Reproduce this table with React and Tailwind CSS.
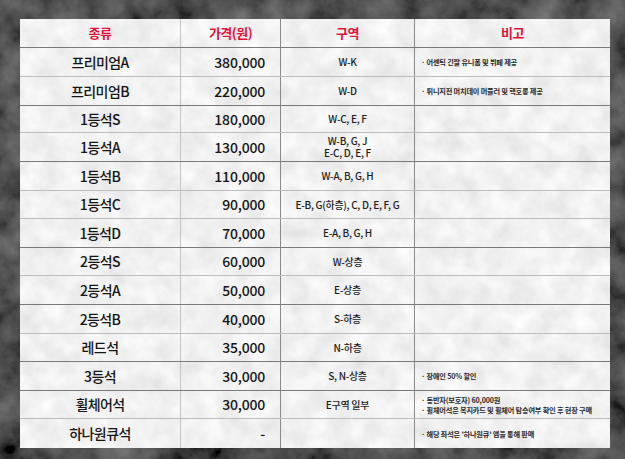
import React from "react";

const rows = [
  { name: "프리미엄A", price: "380,000", zone: ["W-K"], note: ["· 어센틱 긴팔 유니폼 및 뷔페 제공"], h: "h-[29px]", dark: false },
  { name: "프리미엄B", price: "220,000", zone: ["W-D"], note: ["· 튀니지전 머치데이 머플러 및 핵호롱 제공"], h: "h-[29px]", dark: true },
  { name: "1등석S", price: "180,000", zone: ["W-C, E, F"], note: [], h: "h-[27px]", dark: false },
  { name: "1등석A", price: "130,000", zone: ["W-B, G, J", "E-C, D, E, F"], note: [], h: "h-[29px]", dark: true },
  { name: "1등석B", price: "110,000", zone: ["W-A, B, G, H"], note: [], h: "h-[29px]", dark: false },
  { name: "1등석C", price: "90,000", zone: ["E-B, G(하층), C, D, E, F, G"], note: [], h: "h-[28px]", dark: false },
  { name: "1등석D", price: "70,000", zone: ["E-A, B, G, H"], note: [], h: "h-[29px]", dark: true },
  { name: "2등석S", price: "60,000", zone: ["W-상층"], note: [], h: "h-[28px]", dark: false },
  { name: "2등석A", price: "50,000", zone: ["E-상층"], note: [], h: "h-[29px]", dark: true },
  { name: "2등석B", price: "40,000", zone: ["S-하층"], note: [], h: "h-[29px]", dark: false },
  { name: "레드석", price: "35,000", zone: ["N-하층"], note: [], h: "h-[28px]", dark: true },
  { name: "3등석", price: "30,000", zone: ["S, N-상층"], note: ["· 장애인 50% 할인"], h: "h-[29px]", dark: true },
  { name: "휠체어석", price: "30,000", zone: ["E구역 일부"], note: ["· 동반자(보호자) 60,000원", "· 휠체어석은 복지카드 및 휠체어 탑승여부 확인 후 현장 구매"], h: "h-[28px]", dark: false },
  { name: "하나원큐석", price: "-", zone: [""], note: ["· 해당 좌석은 '하나원큐' 앱을 통해 판매"], h: "h-[29px]", dark: null },
];

function Texture({ id, freq, slope, intercept }) {
  return (
    <svg className="absolute inset-0 w-full h-full" aria-hidden="true">
      <filter id={id} x="0" y="0" width="100%" height="100%">
        <feTurbulence type="fractalNoise" baseFrequency={freq} numOctaves="5" seed="7" />
        <feColorMatrix
          type="matrix"
          values={`${slope} 0 0 0 ${intercept}  ${slope} 0 0 0 ${intercept}  ${slope} 0 0 0 ${intercept}  0 0 0 0 1`}
        />
      </filter>
      <rect width="100%" height="100%" filter={`url(#${id})`} />
    </svg>
  );
}

function Lines({ items }) {
  return (
    <span>
      {items.map((t, j) => (
        <React.Fragment key={j}>
          {j > 0 && <br />}
          {t}
        </React.Fragment>
      ))}
    </span>
  );
}

export default function App() {
  return (
    <div className="relative w-[625px] h-[459px] bg-[#141414] overflow-hidden font-['Noto_Sans_CJK_KR',sans-serif]">
      <Texture id="darkTex" freq="0.03" slope="0.24" intercept="-0.04" />
      <div className="relative pt-[19px] pl-[20px]">
        <div className="relative w-[590px] h-[429px] bg-[#e2e2e2]">
          <Texture id="lightTex" freq="0.045" slope="0.28" intercept="0.74" />
          <div className="relative flex flex-col">
            <div className="flex h-[29px] border-b border-[#7a7a7a] text-[#e3103b] font-bold text-[13px] tracking-[-0.5px]">
              <div className="w-[161px] flex items-center justify-center border-r border-[#c4c4c4]">종류</div>
              <div className="w-[100px] flex items-center justify-center border-r border-[#8a8a8a]">가격(원)</div>
              <div className="w-[134px] flex items-center justify-center border-r border-[#8a8a8a]">구역</div>
              <div className="flex-1 flex items-center justify-center">비고</div>
            </div>
            {rows.map((r, i) => (
              <div
                key={i}
                className={`flex ${r.h} ${r.dark === null ? "" : r.dark ? "border-b border-[#7a7a7a]" : "border-b border-[#bdbdbd]"}`}
              >
                <div className="w-[161px] flex items-center justify-center border-r border-[#c4c4c4] text-[14px] font-medium text-[#151515] tracking-[-0.6px]">
                  {r.name}
                </div>
                <div className="w-[100px] flex items-center justify-end pr-[15px] border-r border-[#8a8a8a] text-[14px] font-medium text-[#151515] tracking-[-0.2px]">
                  {r.price}
                </div>
                <div className="w-[134px] flex items-center justify-center text-center border-r border-[#8a8a8a] text-[10px] font-medium text-[#1c1c1c] leading-[12px] tracking-[-0.3px]">
                  <Lines items={r.zone} />
                </div>
                <div className="flex-1 flex items-center pl-[6px] text-[7.2px] font-bold text-[#2a2a2a] leading-[10px] tracking-[-0.2px]">
                  <Lines items={r.note} />
                </div>
              </div>
            ))}
          </div>
        </div>
      </div>
    </div>
  );
}
